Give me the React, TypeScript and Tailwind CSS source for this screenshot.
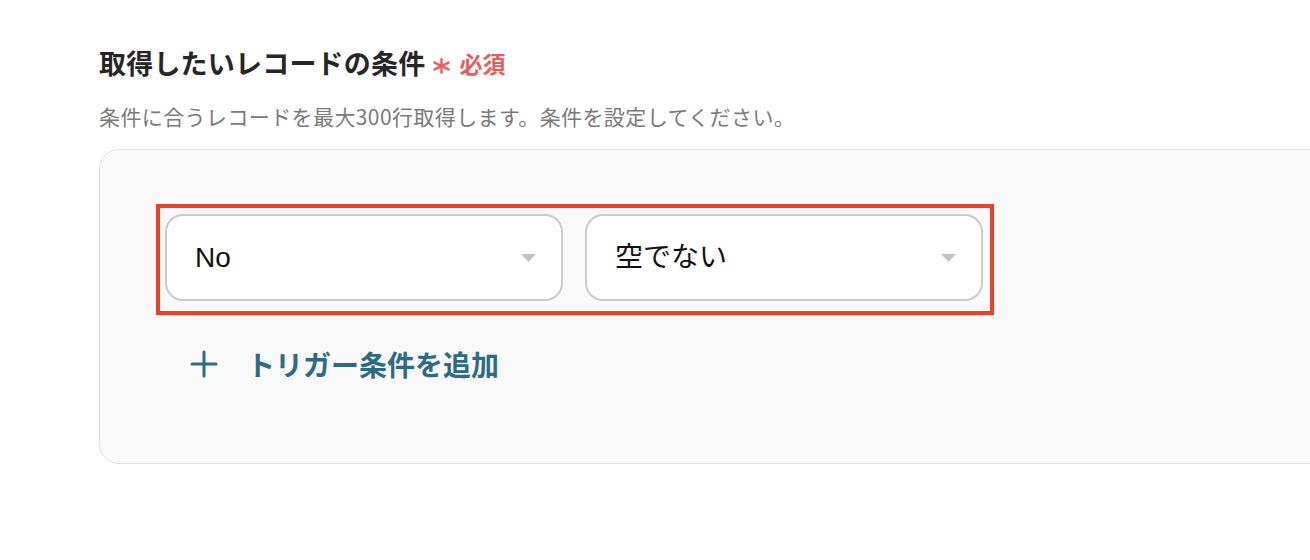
import React from 'react';

const jp = "font-['Noto_Sans_CJK_JP','Noto_Sans',sans-serif]";

function SelectBox({ value }: { value: string }) {
  return (
    <div className="flex h-[87px] w-[398px] items-center justify-between rounded-[18px] border-2 border-[#cbcbcb] bg-white pl-[28px] pr-[25px]">
      <span className={`text-[28px] leading-none text-[#111] font-['Liberation_Sans','Noto_Sans_CJK_JP',sans-serif]`}>
        {value}
      </span>
      <svg width="15" height="8" viewBox="0 0 15 8" className="mt-[1px]">
        <path d="M0 0 H15 L7.5 8 Z" fill="#c4c4c4" />
      </svg>
    </div>
  );
}

export default function App() {
  return (
    <div className={`h-[560px] w-full overflow-hidden bg-white pl-[99px] pt-[45px] ${jp}`}>
      {/* 見出し */}
      <div className="flex items-center h-[36px]">
        <h2 className="text-[27px] font-bold leading-[36px] tracking-[0.2px] text-[#262626]">取得したいレコードの条件</h2>
        <svg width="17" height="16" viewBox="0 0 17 16" className="ml-[8px] mt-[6px]">
          <g stroke="#e85c5c" strokeWidth="2.4" strokeLinecap="round">
            <line x1="8.5" y1="1.2" x2="8.5" y2="14.8" />
            <line x1="1.5" y1="4.6" x2="15.5" y2="11.4" />
            <line x1="1.5" y1="11.4" x2="15.5" y2="4.6" />
          </g>
        </svg>
        <span className="ml-[9px] text-[23px] font-bold leading-[36px] text-[#e85c5c]">必須</span>
      </div>
      <p className="mt-[20px] text-[21px] leading-[30px] tracking-[0.4px] text-[#7a7a7a]">
        条件に合うレコードを最大300行取得します。条件を設定してください。
      </p>

      {/* 条件パネル */}
      <div className="mt-[18px] h-[315px] w-[1260px] rounded-[20px] border-[1.5px] border-[#e0e1e5] bg-[#f9f9f9] pl-[56px] pt-[54px]">
        <div className="flex h-[111px] w-[838px] gap-[22px] border-4 border-[#e8432a] pl-[5px] pt-[6px]">
          <SelectBox value="No" />
          <SelectBox value="空でない" />
        </div>

        <button className="ml-[34px] mt-[33px] flex items-center gap-[29px] text-[#2d6a83]">
          <svg width="28" height="28" viewBox="0 0 28 28">
            <g stroke="#2d6a83" strokeWidth="3" strokeLinecap="round">
              <line x1="14" y1="2" x2="14" y2="26" />
              <line x1="2" y1="14" x2="26" y2="14" />
            </g>
          </svg>
          <span className="text-[28px] font-bold leading-[32px]">トリガー条件を追加</span>
        </button>
      </div>
    </div>
  );
}
